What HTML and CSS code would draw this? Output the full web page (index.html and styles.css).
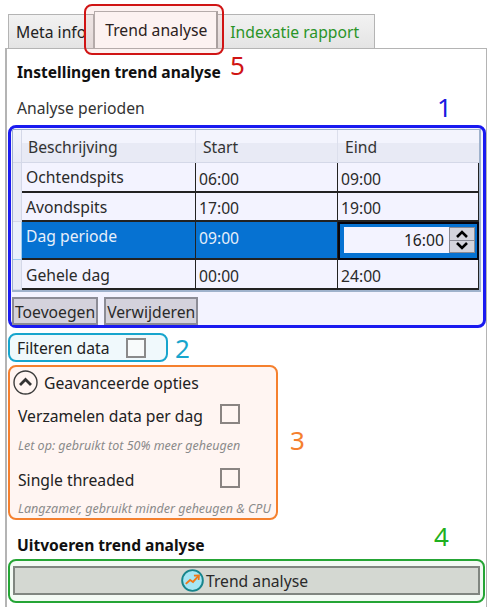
FILE: index.html
```html
<!doctype html>
<html lang="en">
<head>
    <meta charset="UTF-8">
    <title>Trend analyse</title>
    <link rel="stylesheet" href="styles.css">
</head>
<body>
<div class="page">
    <div class="tabs">
        <div class="tab">Meta info</div>
        <div class="tab active">Trend analyse</div>
        <div class="tab green">Indexatie rapport</div>
    </div>
    <div class="panel">
        <h2 class="heading">Instellingen trend analyse</h2>
        <div class="sub">Analyse perioden</div>

        <div class="box blue">
            <div class="grid">
                <div class="row head">
                    <div class="rowhead"></div>
                    <div class="hcell">Beschrijving</div>
                    <div class="hcell">Start</div>
                    <div class="hcell">Eind</div>
                </div>
                <div class="row r1">
                    <div class="rowhead"></div>
                    <div class="cell name">Ochtendspits</div>
                    <div class="cell">06:00</div>
                    <div class="cell">09:00</div>
                </div>
                <div class="row r2">
                    <div class="rowhead"></div>
                    <div class="cell name">Avondspits</div>
                    <div class="cell">17:00</div>
                    <div class="cell">19:00</div>
                </div>
                <div class="row r3 selected">
                    <div class="rowhead"></div>
                    <div class="cell name">Dag periode</div>
                    <div class="cell">09:00</div>
                    <div class="cell edit">
                        <div class="spin">
                            <div class="spinval">16:00</div>
                            <div class="spinbtns">
                                <div class="spinbtn">
                                    <svg width="14" height="8" viewBox="0 0 14 8"><path d="M2 7 L7 2 L12 7" fill="none" stroke="#000" stroke-width="2.6"/></svg>
                                </div>
                                <div class="spinbtn">
                                    <svg width="14" height="8" viewBox="0 0 14 8"><path d="M2 1 L7 6 L12 1" fill="none" stroke="#000" stroke-width="2.6"/></svg>
                                </div>
                            </div>
                        </div>
                    </div>
                </div>
                <div class="row r4">
                    <div class="rowhead"></div>
                    <div class="cell name">Gehele dag</div>
                    <div class="cell">00:00</div>
                    <div class="cell">24:00</div>
                </div>
            </div>
            <div class="actions">
                <div class="btn">Toevoegen</div>
                <div class="btn">Verwijderen</div>
            </div>
        </div>

        <div class="box cyan">
            <span>Filteren data</span>
            <span class="check"></span>
        </div>

        <div class="box orange">
            <div class="expander">
                <svg width="25" height="25" viewBox="0 0 25 25">
                    <circle cx="12.5" cy="12.5" r="11.5" fill="none" stroke="#3c3c3c" stroke-width="1.4"/>
                    <path d="M7 15 L12.5 9.5 L18 15" fill="none" stroke="#333" stroke-width="2.8"/>
                </svg>
                <span>Geavanceerde opties</span>
            </div>
            <div class="option">
                <span class="optlabel">Verzamelen data per dag</span>
                <span class="check"></span>
            </div>
            <div class="hint">Let op: gebruikt tot 50% meer geheugen</div>
            <div class="option second">
                <span class="optlabel">Single threaded</span>
                <span class="check"></span>
            </div>
            <div class="hint">Langzamer, gebruikt minder geheugen &amp; CPU</div>
        </div>

        <h2 class="heading run">Uitvoeren trend analyse</h2>
        <div class="box greenbox">
            <div class="runbtn">
                <svg width="23" height="23" viewBox="0 0 24 24">
                    <circle cx="12" cy="12" r="10.8" fill="#a6e6f4" stroke="#17858c" stroke-width="2"/>
                    <path d="M5 15.5 L9.5 11.5 L12.5 13.5 L18 7.5" fill="none" stroke="#f07818" stroke-width="2"/>
                    <path d="M13.5 7 L18.8 6.6 L18.4 11.5" fill="none" stroke="#f07818" stroke-width="1.8"/>
                </svg>
                <span>Trend analyse</span>
            </div>
        </div>
    </div>

    <div class="redmark"></div>
    <span class="num n1">1</span>
    <span class="num n2">2</span>
    <span class="num n3">3</span>
    <span class="num n4">4</span>
    <span class="num n5">5</span>
</div>
</body>
</html>
```

FILE: styles.css
```css
* {
    margin: 0;
    padding: 0;
    box-sizing: border-box;
}

html, body {
    height: 100%;
    overflow: hidden;
    background: #fff;
}

body {
    font-family: "Noto Sans", "Open Sans", sans-serif;
    font-size: 15.7px;
    color: #222;
}

.page {
    position: relative;
    width: 493px;
    height: 607px;
    padding: 11px 6px 0 5px;
}

/* tabs */
.tabs {
    display: flex;
    align-items: flex-end;
    height: 37px;
    padding-left: 3px;
}

.tab {
    height: 34px;
    padding: 6px 7px 0;
    border: 1px solid #b4b4b4;
    border-bottom: 0;
    background: linear-gradient(#f2f2f2, #e4e4e4);
    white-space: nowrap;
}

.tab.active {
    width: 124px;
    height: 37px;
    padding: 7px 10px 0;
    background: #fff;
    border-right: 2px solid #a8a8a8;
}

.tab.green {
    color: #2a9428;
    width: 157px;
    padding-left: 12px;
    border-left: 0;
}

.panel {
    height: 560px;
    border: 1px solid #b4b4b4;
    border-left-width: 2px;
    border-bottom: 0;
    padding: 0 0 0 1px;
}

.heading {
    font-size: 15.6px;
    font-weight: 700;
    color: #111;
    margin: 11px 0 0 9px;
    line-height: 24px;
}

.sub {
    margin: 12px 0 0 9px;
    line-height: 24px;
    color: #333;
}

.box {
    border: 2px solid;
    border-radius: 8px;
}

/* periods */
.blue {
    width: 478px;
    height: 203px;
    margin-top: 5px;
    padding: 1px;
    border: 3px solid #1a1af0;
    background: #f3f3ff;
}

.grid {
    height: 163px;
    width: 469px;
    border: 1px solid #9fb2cc;
    border-right-width: 3px;
    border-bottom-width: 2px;
}

.row {
    display: grid;
    grid-template-columns: 9px 174px 142px 141px;
}

.head { height: 33px; }
.r1 { height: 29px; }
.r2 { height: 30px; }
.r3 { height: 38px; }
.r4 { height: 30px; }

.rowhead {
    background: #e8eaf5;
    border-right: 1px solid #d4d8e8;
    border-bottom: 1px solid #d4d8e8;
}

.head .rowhead {
    background: linear-gradient(#f4f5fc, #e8eaf6);
}

.selected .rowhead {
    background: #eaf1fb;
    border-right: 1px solid #9ccbf0;
    border-bottom: 1px solid #9ccbf0;
}

.hcell {
    padding: 5px 0 0 6px;
    background: linear-gradient(#f3f4fd 40%, #e8eaf5 40%, #e8eaf5);
    border-right: 1px solid #dcdfec;
    border-bottom: 1px solid #d4d8e8;
    line-height: 24px;
    color: #333;
}

.hcell:nth-child(3) { padding-left: 7px; }
.hcell:nth-child(4) { padding-left: 7px; border-right: 0; }

.cell {
    padding: 4px 0 0 3px;
    line-height: 24px;
    border-right: 1px solid #222;
    border-bottom: 2px solid #222;
    color: #2a2a2a;
}

.cell.name { padding: 2px 0 0 4px; }
.r2 .cell { padding-top: 4px; }
.r2 .cell.name { padding-top: 3px; }
.r3 .cell { padding-top: 4px; }
.r3 .cell.name { padding-top: 2px; }
.r4 .cell { padding-top: 4px; }
.r4 .cell.name { padding-top: 3px; }

.selected .cell {
    background: #0672d2;
    color: #e6effa;
}

.selected .cell.edit {
    padding: 3px 2px 5px 4px;
    border: 2px solid #05050f;
    color: #222;
}

.spin {
    display: flex;
    height: 26px;
    background: #f3f3ff;
}

.spinval {
    flex: 1;
    text-align: right;
    padding-right: 5px;
    line-height: 26px;
}

.spinbtns {
    width: 26px;
    display: flex;
    flex-direction: column;
    gap: 1px;
    background: #8a8a94;
    border: 1px solid #8a8a94;
}

.spinbtn {
    flex: 1;
    background: #d4d4dc;
    display: flex;
    align-items: center;
    justify-content: center;
}

.actions {
    display: flex;
    gap: 6px;
    margin-top: 5px;
}

.btn {
    height: 28px;
    padding: 0 1px;
    line-height: 26px;
    background: #d4d2dc;
    border: 2px solid #8c8c96;
    color: #2a2a2a;
    white-space: nowrap;
}

/* filter */
.cyan {
    display: flex;
    align-items: center;
    gap: 17px;
    width: 160px;
    height: 29px;
    margin-top: 5px;
    padding-left: 7px;
    border-color: #17a5cd;
    background: #f0f9fc;
    line-height: 24px;
}

.check {
    display: block;
    width: 20px;
    height: 20px;
    border: 2px solid #8a8a8a;
    background: #f8fbfb;
}

/* advanced */
.orange {
    width: 270px;
    height: 155px;
    margin-top: 3px;
    padding: 3px 0 0 3px;
    border-color: #f5802e;
    background: #fff5f2;
}

.expander {
    display: flex;
    align-items: center;
    gap: 6px;
    line-height: 24px;
}

.option {
    display: flex;
    align-items: flex-start;
    justify-content: space-between;
    width: 222px;
    margin: 9px 0 0 5px;
    height: 24px;
    line-height: 24px;
}

.option.second {
    margin-top: 14px;
}

.option .check {
    background: #fff5f2;
    border-color: #8a8482;
}

.hint {
    margin: 10px 0 0 5px;
    font-size: 12.5px;
    font-style: italic;
    color: #8a8a8a;
    line-height: 16px;
    white-space: nowrap;
}

.second + .hint {
    margin-top: 9px;
}

.heading.run {
    margin-top: 13px;
}

/* run button */
.greenbox {
    width: 477px;
    height: 44px;
    margin-top: 2px;
    padding: 5px 3px;
    border-color: #25a535;
    background: #f3faf4;
}

.runbtn {
    display: flex;
    align-items: center;
    justify-content: center;
    gap: 2px;
    height: 29px;
    padding-right: 4px;
    background: #d4d8d2;
    border: 2px solid #808680;
    color: #2a2a2a;
}

/* annotations drawn over the screenshot */
.redmark {
    position: absolute;
    left: 84px;
    top: 4px;
    width: 140px;
    height: 51px;
    border: 2px solid #d01414;
    border-radius: 8px;
    background: rgba(210, 40, 20, .06);
}

.num {
    position: absolute;
    font-size: 26px;
    line-height: 30px;
}

.n1 { left: 437px; top: 92px; color: #1a1ae0; }
.n2 { left: 175px; top: 333px; color: #17a5cd; }
.n3 { left: 290px; top: 425px; color: #f5802e; }
.n4 { left: 434px; top: 521px; color: #1fb020; }
.n5 { left: 230px; top: 50px; color: #d01414; }
```
